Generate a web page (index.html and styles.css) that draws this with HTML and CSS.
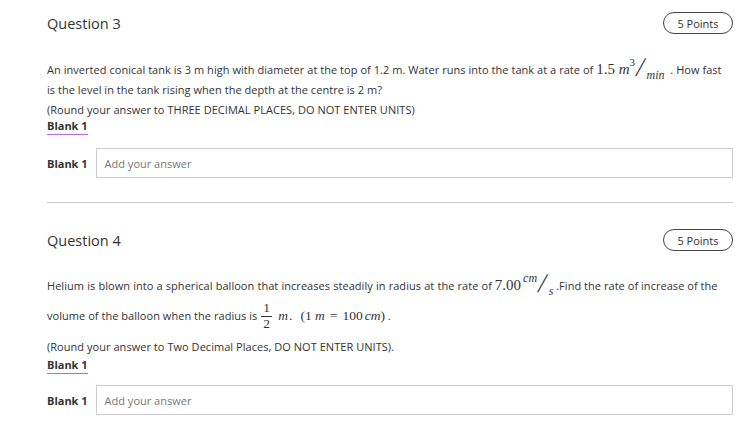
FILE: index.html
```html
<!DOCTYPE html>
<html>
<head>
<meta charset="utf-8">
<link rel="stylesheet" href="styles.css">
</head>
<body>
<div class="page">
  <section class="question q3">
    <div class="qhead">
      <h2 class="qtitle">Question 3</h2>
      <span class="points">5 Points</span>
    </div>
    <div class="qtext">
      <div class="line">An inverted conical tank is 3 m high with diameter at the top of 1.2 m. Water runs into the tank at a rate of <span class="math"><span class="mn">1.5</span> <span class="mi">m</span><sup class="sup">3</sup><span class="slash">/</span><sub class="sub">min</sub></span> &nbsp;. How fast</div>
      <div class="line">is the level in the tank rising when the depth at the centre is 2 m?</div>
      <div class="line">(Round your answer to THREE DECIMAL PLACES, DO NOT ENTER UNITS)</div>
      <div class="blank-ref"><span class="blank-link">Blank 1</span></div>
    </div>
    <div class="answer-row">
      <span class="answer-label">Blank 1</span>
      <div class="answer-box">Add your answer</div>
    </div>
  </section>
  <hr class="divider">
  <section class="question q4">
    <div class="qhead">
      <h2 class="qtitle">Question 4</h2>
      <span class="points">5 Points</span>
    </div>
    <div class="qtext">
      <div class="line"><span class="wide">Helium is blown into a spherical balloon that increases steadily in radius at the rate of</span> <span class="math"><span class="mn">7.00</span><sup class="sup sup-cm">cm</sup><span class="slash">/</span><sub class="sub">s</sub></span> .Find the rate of increase of the</div>
      <div class="line line-frac">volume of the balloon when the radius is <span class="math"><span class="frac"><span class="num">1</span><span class="den">2</span></span> <span class="mi">m</span><span class="dot">.</span><span class="paren">(1</span> <span class="mi">m</span><span class="eq">=</span>100<span class="mi cm">cm</span>)</span> .</div>
      <div class="line line-round">(Round your answer to Two Decimal Places, DO NOT ENTER UNITS).</div>
      <div class="blank-ref"><span class="blank-link">Blank 1</span></div>
    </div>
    <div class="answer-row">
      <span class="answer-label">Blank 1</span>
      <div class="answer-box">Add your answer</div>
    </div>
  </section>
</div>
</body>
</html>
```
FILE: styles.css
```css
* { box-sizing: border-box; }
html, body { margin: 0; padding: 0; background: #fff; }
body {
  font-family: "Open Sans", "Noto Sans", sans-serif;
  color: #333;
  font-size: 11px;
}
.page {
  padding: 12px 13px 0 47px;
}
.qhead {
  display: flex;
  align-items: center;
  justify-content: space-between;
  height: 22px;
}
.qtitle {
  margin: 0;
  font-size: 14.5px;
  font-weight: 400;
  color: #333;
}
.points {
  display: inline-flex;
  align-items: center;
  justify-content: center;
  width: 70px;
  height: 22px;
  border: 1px solid #444;
  border-radius: 11px;
  font-size: 11px;
  color: #333;
}
.qtext { margin-top: 26px; }
.q4 .qtext { margin-top: 25px; }
.line {
  height: 20px;
  line-height: 20px;
  white-space: nowrap;
  letter-spacing: 0.04px;
}
.wide { word-spacing: 0.25px; }
.line-frac { height: 30px; line-height: 30px; margin-top: 5px; }
.line-round { margin-top: 6px; }
.blank-ref {
  height: 16px;
  line-height: 14px;
  margin-top: 1px;
}
.q3 .blank-ref { margin-top: -1px; }
.blank-link {
  font-weight: 700;
  display: inline-block;
  border-bottom: 1px solid #b86bd6;
  padding-bottom: 1px;
}
.answer-row {
  display: flex;
  align-items: center;
  gap: 8px;
  margin-top: 13px;
}
.q4 .answer-row { margin-top: 11px; }
.answer-label { font-weight: 700; }
.answer-box {
  flex: 1;
  height: 30px;
  border: 1px solid #ccc;
  padding-left: 8px;
  display: flex;
  align-items: center;
  color: #777;
}
.divider {
  border: 0;
  border-top: 1px solid #ccc;
  margin: 24px 0 26px 0;
}
.math {
  font-family: "Liberation Serif", "DejaVu Serif", serif;
  font-size: 15px;
  line-height: 0;
  color: #333;
  letter-spacing: 0;
}
.mi { font-style: italic; }
.sup {
  font-size: 11px;
  position: relative;
  vertical-align: 0;
  top: -8px;
  font-style: normal;
}
.sup-cm { font-style: italic; margin-left: 2px; font-size: 12px; }
.slash {
  font-size: 27px;
  font-weight: 300;
  display: inline-block;
  margin: 0 2px;
  position: relative;
  top: 2px;
  transform: skewX(-12deg);
}
.sub {
  font-size: 12px;
  font-style: italic;
  position: relative;
  vertical-align: 0;
  top: 5px;
}
.frac {
  display: inline-flex;
  flex-direction: column;
  align-items: center;
  vertical-align: middle;
  line-height: 14px;
  font-size: 13.5px;
  margin: 0 3px 0 1px;
  position: relative;
  top: -1px;
}
.num { border-bottom: 1px solid #333; padding: 0 2px 1px; }
.den { padding-top: 0; }
.q4 .line-frac .math { font-size: 13.5px; }
.dot { margin-right: 8px; margin-left: 1px; }
.eq { margin: 0 5px; }
.cm { margin-left: 2px; }
```
